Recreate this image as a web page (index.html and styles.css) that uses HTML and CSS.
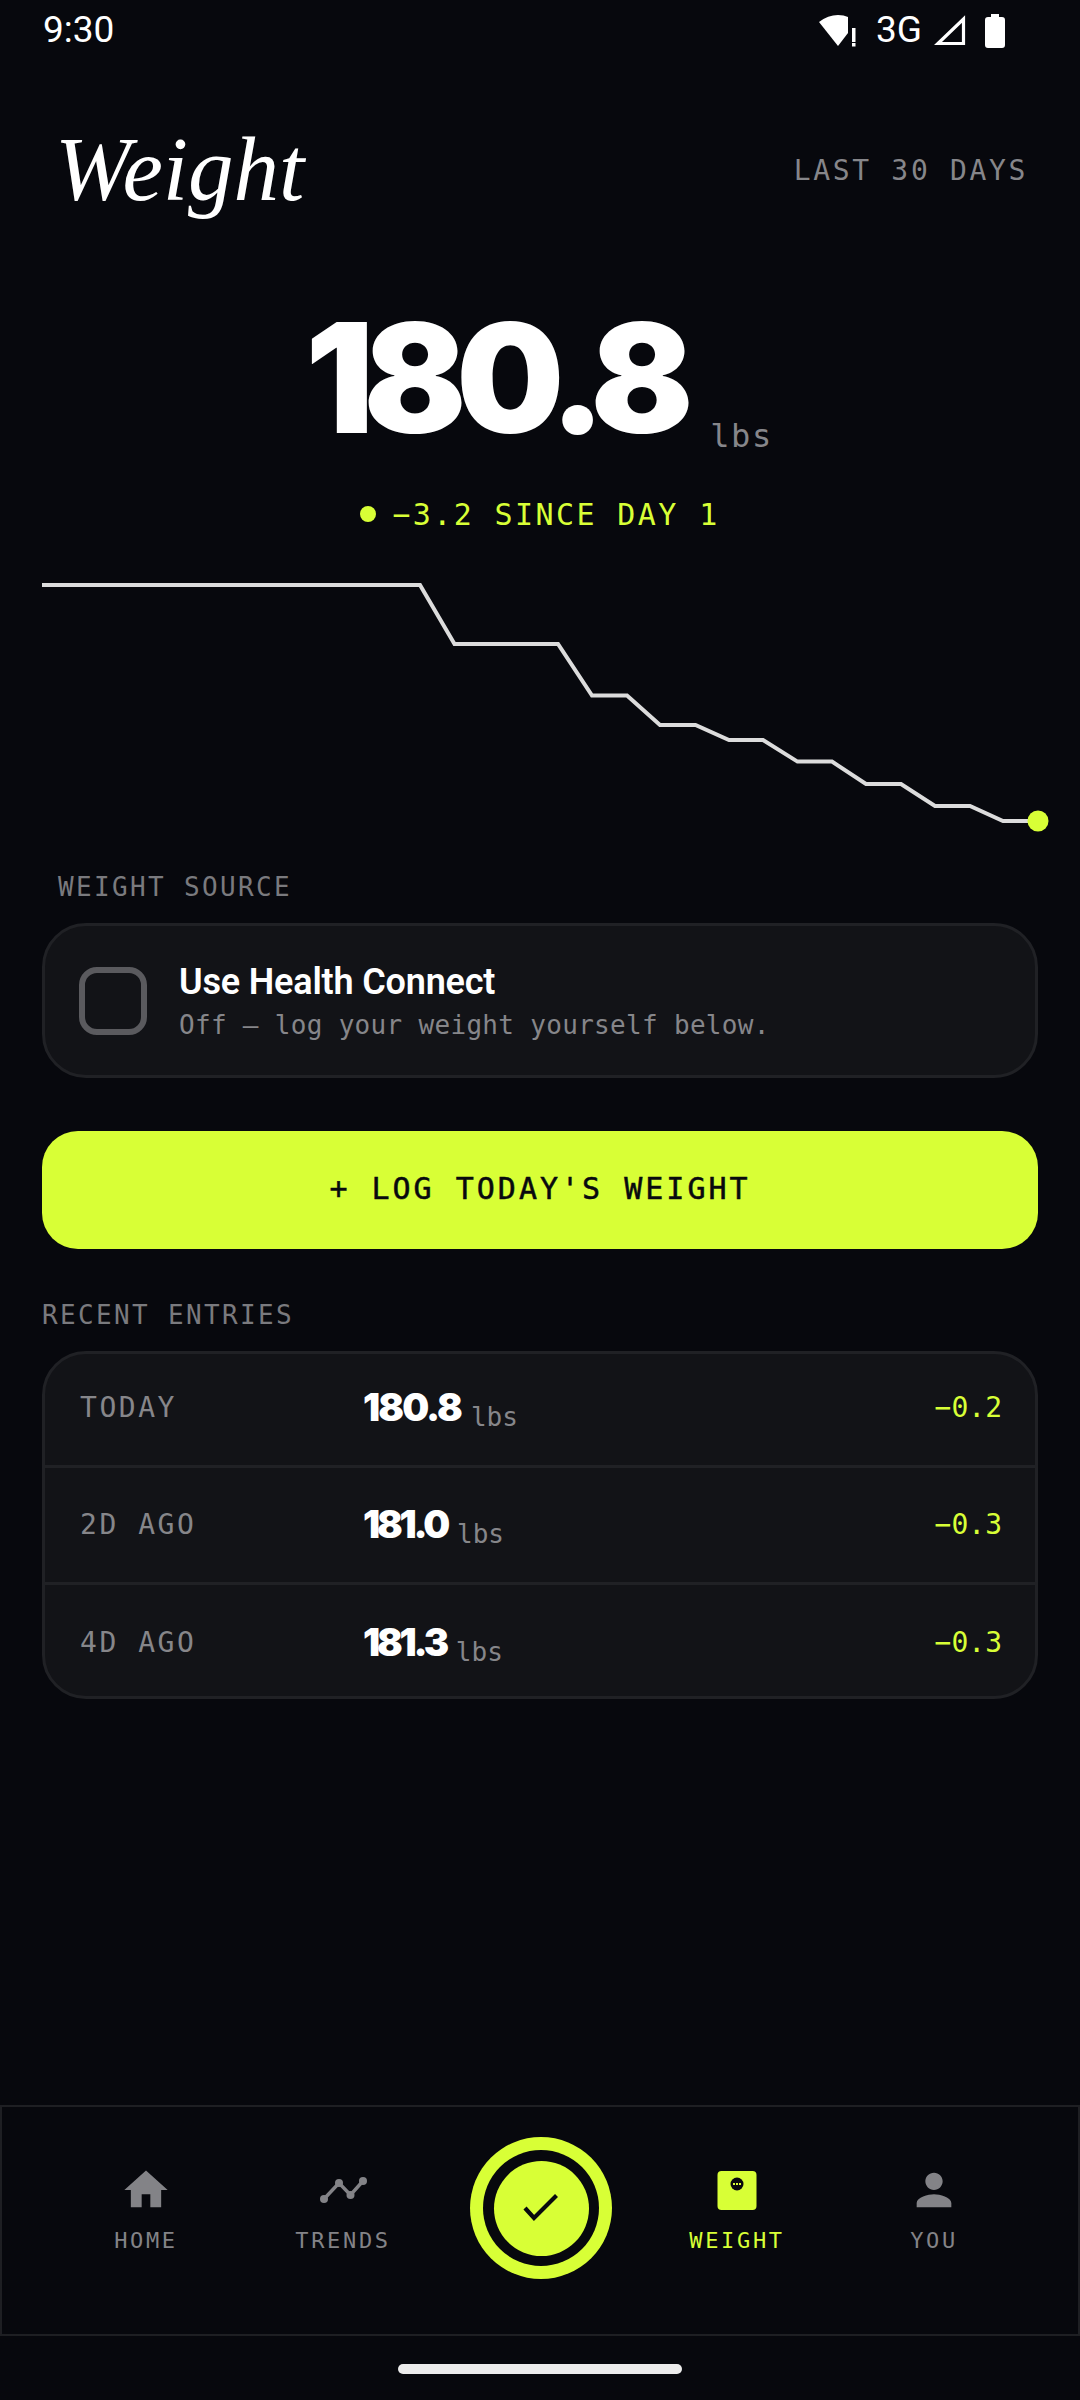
FILE: index.html
```html
<!DOCTYPE html>
<html lang="en">
<head>
<meta charset="utf-8">
<title>Weight</title>
<link rel="stylesheet" href="styles.css">
</head>
<body>
<div class="screen">
  <div class="status">
    <span class="time">9:30</span>
    <div class="status-right">
      <svg class="ic-wifi" width="38" height="34" viewBox="0 0 38 34"><path d="M0 8Q9 1 19 1Q25 1 29 3V19L19 32Z" fill="#fff"/><rect x="33" y="14" width="3.5" height="14" fill="#fff"/><rect x="33" y="29" width="3.5" height="3.5" fill="#fff"/></svg>
      <span class="net">3G</span>
      <svg class="ic-signal" width="33" height="32" viewBox="0 0 33 32"><path d="M30.5 5V29.5H5Z" fill="none" stroke="#fff" stroke-width="3.2"/></svg>
      <svg class="ic-batt" width="20" height="34" viewBox="0 0 20 34"><path d="M6 0H14V3H17Q20 3 20 6V31Q20 34 17 34H3Q0 34 0 31V6Q0 3 3 3H6Z" fill="#fff"/></svg>
    </div>
  </div>

  <header class="head">
    <h1 class="title">Weight</h1>
    <span class="range">LAST 30 DAYS</span>
  </header>

  <div class="hero">
    <span class="big">180.8</span>
    <span class="big-unit">lbs</span>
  </div>
  <div class="since"><i class="since-dot"></i><span>−3.2 SINCE DAY 1</span></div>

  <svg class="chart" width="996" height="280" viewBox="0 0 996 280">
    <polyline fill="none" stroke="#dcdcdc" stroke-width="4" points="0,25 378,25 412.5,84 516,84 550,135.5 585,135.5 618,165 653.5,165 687,180 721,180 755.5,201.6 790,201.6 824,224 859,224 893,246 928,246 961,261 996,261"/>
    <circle cx="996" cy="261" r="10.5" fill="#d8ff36"/>
  </svg>

  <div class="label label-source">WEIGHT SOURCE</div>
  <div class="source-card">
    <span class="check"></span>
    <div class="source-text">
      <div class="source-title">Use Health Connect</div>
      <div class="source-sub">Off — log your weight yourself below.</div>
    </div>
  </div>

  <button class="log-btn">+ LOG TODAY'S WEIGHT</button>

  <div class="label label-recent">RECENT ENTRIES</div>
  <div class="entries">
    <div class="entry entry-first">
      <span class="entry-day">TODAY</span>
      <span class="entry-val"><b>180.8</b><small>lbs</small></span>
      <span class="entry-delta">−0.2</span>
    </div>
    <div class="entry entry-mid">
      <span class="entry-day">2D AGO</span>
      <span class="entry-val"><b class="tight">181.0</b><small>lbs</small></span>
      <span class="entry-delta">−0.3</span>
    </div>
    <div class="entry entry-last">
      <span class="entry-day">4D AGO</span>
      <span class="entry-val"><b class="tight">181.3</b><small>lbs</small></span>
      <span class="entry-delta">−0.3</span>
    </div>
  </div>

  <nav class="nav">
    <div class="nav-item">
      <svg class="nav-ic" viewBox="0 0 24 24"><path d="M10 20v-6h4v6h5v-8h3L12 3 2 12h3v8z"/></svg>
      <span>HOME</span>
    </div>
    <div class="nav-item">
      <svg class="nav-ic" viewBox="0 0 52 52"><polyline points="7,35 22,19 33.5,31 46,17" fill="none" stroke="#838387" stroke-width="3.4"/><circle cx="7" cy="35" r="4"/><circle cx="22" cy="19" r="4"/><circle cx="33.5" cy="31" r="4"/><circle cx="46" cy="17" r="4"/></svg>
      <span>TRENDS</span>
    </div>
    <div class="nav-fab">
      <div class="fab-outer"><div class="fab-gap"><div class="fab-inner">
        <svg width="36" height="28" viewBox="0 0 36 28"><polyline points="2,14 11,24 33.5,1.5" fill="none" stroke="#08090e" stroke-width="4.2"/></svg>
      </div></div></div>
    </div>
    <div class="nav-item nav-item-active">
      <svg class="nav-ic" viewBox="0 0 52 52"><rect x="6.5" y="7" width="39" height="39" rx="4"/><circle cx="26" cy="20" r="6.5" fill="#08090e"/><rect x="22" y="19" width="2" height="2" /><rect x="25" y="19" width="2" height="2"/><rect x="28" y="19" width="2" height="2"/></svg>
      <span>WEIGHT</span>
    </div>
    <div class="nav-item">
      <svg class="nav-ic" viewBox="0 0 24 24"><path d="M12 12c2.21 0 4-1.79 4-4s-1.79-4-4-4-4 1.79-4 4 1.79 4 4 4zm0 2c-2.67 0-8 1.34-8 4v2h16v-2c0-2.66-5.33-4-8-4z"/></svg>
      <span>YOU</span>
    </div>
  </nav>
  <div class="home-area"><div class="home-bar"></div></div>
</div>
</body>
</html>
```
FILE: styles.css
```css
* { box-sizing: border-box; }
html, body { margin: 0; padding: 0; background: #07080d; }
.screen {
  width: 1080px;
  height: 2400px;
  display: flex;
  flex-direction: column;
  background: #07080d;
  color: #fff;
  font-family: "DejaVu Sans Mono", monospace;
  overflow: hidden;
}
.status {
  height: 60px;
  display: flex;
  align-items: center;
  justify-content: space-between;
  padding: 0 75px 0 43px;
  font-family: Roboto, sans-serif;
  font-size: 37px;
}
.status-right { display: flex; align-items: center; }
.time, .net { line-height: 64px; }
.net { margin-left: 19px; }
.ic-wifi { display: block; margin-top: 1px; }
.ic-signal { display: block; margin-left: 11px; }
.ic-batt { display: block; margin-left: 19px; margin-top: 1px; }

.head {
  height: 100px;
  display: flex;
  align-items: center;
  justify-content: space-between;
  padding: 0 52px 0 55px;
  margin-top: 60px;
}
.title {
  margin: 0;
  font-family: "Liberation Serif", serif;
  font-style: italic;
  font-weight: 400;
  font-size: 91px;
  line-height: 100px;
}
.range {
  font-size: 28px;
  letter-spacing: 0.095em;
  color: #86868a;
}
.hero {
  margin-top: 80px;
  padding-right: 2px;
  display: flex;
  justify-content: center;
  align-items: flex-end;
  gap: 27px;
}
.big {
  font-family: Inter, sans-serif;
  font-weight: 900;
  font-size: 152px;
  line-height: 156px;
  letter-spacing: -0.068em;
}
.big-unit {
  font-size: 32px;
  line-height: 40px;
  letter-spacing: 0.05em;
  color: #86868a;
}
.since {
  margin-top: 38px;
  height: 40px;
  display: flex;
  justify-content: center;
  align-items: center;
  gap: 16px;
  font-size: 30px;
  letter-spacing: 0.08em;
  color: #d8ff36;
}
.since-dot { width: 16px; height: 16px; border-radius: 50%; background: #d8ff36; }
.chart { display: block; margin: 26px 0 0 42px; overflow: visible; flex: none; }
.label {
  font-size: 26px;
  line-height: 32px;
  letter-spacing: 0.09em;
  color: #7a7a7e;
}
.label-source { margin: 31px 0 0 58px; }
.label-recent { margin: 50px 0 0 42px; }
.source-card {
  margin: 20px 42px 0;
  height: 155px;
  flex: none;
  display: flex;
  align-items: center;
  gap: 32px;
  padding: 0 34px;
  background: #121317;
  border: 3px solid #202125;
  border-radius: 44px;
}
.check {
  width: 68px;
  height: 68px;
  border: 6px solid #5a5a5e;
  border-radius: 18px;
}
.source-title {
  font-family: Roboto, sans-serif;
  font-weight: 600;
  font-size: 36px;
  line-height: 44px;
  letter-spacing: -0.005em;
}
.source-sub {
  font-size: 26px;
  line-height: 34px;
  margin-top: 4px;
  letter-spacing: 0.012em;
  color: #86868a;
}
.log-btn {
  margin: 53px 42px 0;
  height: 118px;
  flex: none;
  border: 0;
  padding: 0 0 3px;
  border-radius: 36px;
  background: #d8ff36;
  color: #08090e;
  font-family: "DejaVu Sans Mono", monospace;
  font-size: 30px;
  font-weight: 400;
  letter-spacing: 0.1em;
  -webkit-text-stroke: 0.5px #08090e;
}
.entries {
  margin: 20px 42px 0;
  height: 348px;
  flex: none;
  display: flex;
  flex-direction: column;
  background: #121317;
  border: 3px solid #202125;
  border-radius: 44px;
}
.entry {
  flex: none;
  display: grid;
  grid-template-columns: 283px 1fr auto;
  align-items: center;
  padding: 0 33px 0 35px;
  border-bottom: 3px solid #202125;
}
.entry-first { height: 114px; padding-bottom: 5px; }
.entry-mid { height: 117px; padding-bottom: 2px; }
.entry-last { height: 111px; padding-top: 3px; border-bottom: 0; }
.entry-day { font-size: 28px; letter-spacing: 0.09em; color: #86868a; }
.entry-val { display: flex; align-items: flex-end; gap: 10px; }
.entry-val b {
  font-family: Inter, sans-serif;
  font-weight: 900;
  font-size: 38px;
  line-height: 44px;
  letter-spacing: -0.05em;
}
.entry-val b.tight { letter-spacing: -0.085em; }
.entry-val small {
  font-size: 26px;
  line-height: 32px;
  margin-bottom: -4px;
  color: #86868a;
}
.entry-delta { font-size: 28px; color: #d8ff36; }
.nav {
  margin-top: auto;
  height: 231px;
  flex: none;
  display: grid;
  grid-template-columns: repeat(5, 197px);
  justify-content: center;
  padding-top: 57px;
  border: 2px solid #1e1f23;
}
.nav-item {
  display: flex;
  flex-direction: column;
  align-items: center;
  gap: 12px;
  font-size: 22px;
  line-height: 26px;
  letter-spacing: 0.12em;
  color: #838387;
}
.nav-ic { width: 52px; height: 52px; fill: #838387; display: block; }
.nav-item-active { color: #d8ff36; }
.nav-item-active .nav-ic { fill: #d8ff36; }
.nav-fab { display: flex; justify-content: center; margin: -27px 0 0 2px; }
.fab-outer, .fab-gap, .fab-inner { border-radius: 50%; display: flex; align-items: center; justify-content: center; }
.fab-outer { width: 142px; height: 142px; background: #d8ff36; }
.fab-gap { width: 116px; height: 116px; background: #07080d; }
.fab-inner { width: 95px; height: 95px; background: #d8ff36; }
.home-area { height: 64px; flex: none; padding-top: 28px; }
.home-bar { width: 284px; height: 10px; margin: 0 auto; border-radius: 5px; background: #ececec; }
```
